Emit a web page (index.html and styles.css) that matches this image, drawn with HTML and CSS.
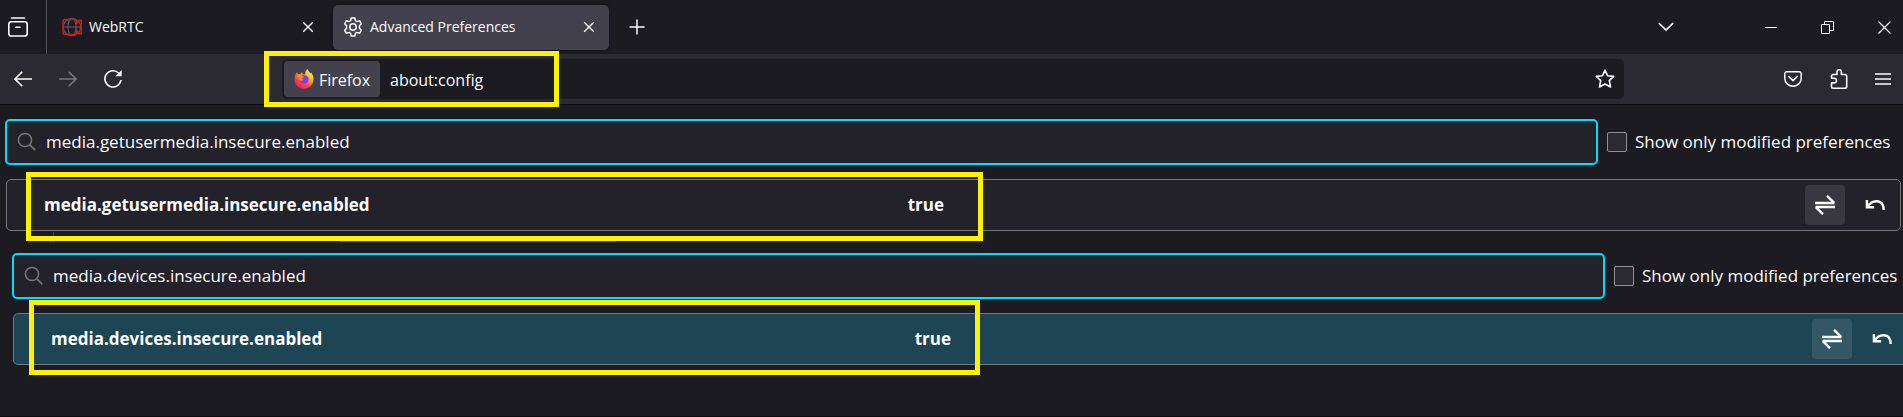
FILE: index.html
```html
<!DOCTYPE html>
<html lang="en">
<head>
<meta charset="utf-8">
<title>Advanced Preferences</title>
<link rel="stylesheet" href="styles.css">
</head>
<body>
<svg class="defs" width="0" height="0" aria-hidden="true">
  <symbol id="i-search" viewBox="0 0 20 20"><circle cx="8" cy="8" r="6.6" fill="none" stroke="currentColor" stroke-width="1.5"/><path d="M12.8 12.8l5.4 5.4" stroke="currentColor" stroke-width="1.7" fill="none"/></symbol>
  <symbol id="i-close" viewBox="0 0 12 12"><path d="M1.2 1.2l9.6 9.6M10.8 1.2l-9.6 9.6" stroke="currentColor" stroke-width="1.4" fill="none"/></symbol>
  <symbol id="i-toggle" viewBox="0 0 20 20"><path d="M0 8h19.4M12 .8L19.2 8M20 12H.6M8 19.2L.8 12" stroke="currentColor" stroke-width="2.4" fill="none"/></symbol>
  <symbol id="i-undo" viewBox="0 0 20 20"><path d="M1.9 5v7.300h7.300M2.300 11.900C5 7.800 8.600 6.100 12 6.300c4.200.3 6.600 3.800 6.700 8.700" stroke="currentColor" stroke-width="2.4" fill="none"/></symbol>
</svg>

<header class="browser">
  <div class="tabbar">
    <button class="view" aria-label="Firefox View">
      <svg width="20" height="20" viewBox="0 0 20 20" fill="none" stroke="currentColor" stroke-width="1.6" stroke-linecap="round"><path d="M3.500 1h13"/><rect x=".8" y="4.800" width="18.400" height="14.200" rx="2.600"/><path d="M8 10.300h4"/></svg>
    </button>
    <div class="tab">
      <svg width="20" height="20" viewBox="0 0 20 20" fill="none"><g stroke="#55535d" stroke-width="1.300"><circle cx="10" cy="10" r="8.700"/><ellipse cx="10" cy="10" rx="4" ry="8.700"/><path d="M1.500 10h17"/></g><path d="M3 2.500h9.500a2 2 0 012 2v2.300l2.800-3.500h1.900v13.400h-1.900l-2.800-3.500v2.300a2 2 0 01-2 2H3a2 2 0 01-2-2v-11a2 2 0 012-2z" stroke="#c4211f" stroke-width="1.500"/></svg>
      <span class="tab-label">WebRTC</span>
      <button class="tab-close" aria-label="Close WebRTC"><svg width="12" height="12"><use href="#i-close"/></svg></button>
    </div>
    <div class="tab tab-active">
      <svg width="20" height="20" viewBox="0 0 20 20" fill="none" stroke="currentColor" stroke-width="1.500" stroke-linejoin="round"><circle cx="10" cy="10" r="3.200"/><path d="M8.200 1h3.600l.6 2.700 1.600.9 2.600-.9 1.800 3.100-2 1.900v2.600l2 1.900-1.800 3.100-2.600-.9-1.600.9-.6 2.700H8.200l-.6-2.700-1.600-.9-2.600.9-1.800-3.100 2-1.900V8.700l-2-1.900 1.800-3.100 2.600.9 1.600-.9z"/></svg>
      <span class="tab-label">Advanced Preferences</span>
      <button class="tab-close" aria-label="Close Advanced Preferences"><svg width="12" height="12"><use href="#i-close"/></svg></button>
    </div>
    <button class="new-tab" aria-label="New tab"><svg width="16" height="16" viewBox="0 0 16 16"><path d="M8 .5v15M.5 8h15" stroke="currentColor" stroke-width="1.500"/></svg></button>
    <div class="window-controls">
      <button class="all-tabs" aria-label="List all tabs"><svg width="16" height="10" viewBox="0 0 16 10" fill="none"><path d="M.8 1L8 8l7.200-7" stroke="currentColor" stroke-width="1.700"/></svg></button>
      <button aria-label="Minimize"><svg width="12" height="13"><path d="M0 6.500h12" stroke="currentColor"/></svg></button>
      <button aria-label="Restore"><svg width="13" height="13" fill="none" stroke="currentColor"><path d="M.5 3.500h8v9h-8zM3.500 3.500v-3h9v9h-4"/></svg></button>
      <button aria-label="Close window"><svg width="13" height="13"><path d="M.5 .5l12 12M12.500 .5l-12 12" stroke="currentColor" stroke-width="1.100"/></svg></button>
    </div>
  </div>

  <nav class="navbar" aria-label="Navigation">
    <div class="history">
      <button aria-label="Back"><svg width="18" height="16" viewBox="0 0 18 16" fill="none"><path d="M8.300.8L1 8l7.300 7.200M1 8h17" stroke="currentColor" stroke-width="1.600"/></svg></button>
      <button aria-label="Forward" class="dim"><svg width="18" height="16" viewBox="0 0 18 16" fill="none"><path d="M9.700.8L17 8l-7.300 7.200M17 8H0" stroke="currentColor" stroke-width="1.600"/></svg></button>
      <button aria-label="Reload"><svg width="20" height="20" viewBox="0 0 20 20" fill="none"><path d="M15.800 4.200A8.100 8.100 0 1018 11" stroke="currentColor" stroke-width="1.600"/><path d="M18.700 1v6.300h-6.300z" fill="currentColor"/></svg></button>
    </div>
    <div class="urlbar">
      <button class="identity">
        <svg width="20" height="20" viewBox="0 0 20 20"><defs><linearGradient id="fx" x1=".85" y1=".1" x2=".2" y2=".95"><stop offset="0" stop-color="#fff04a"/><stop offset=".35" stop-color="#ffa329"/><stop offset=".65" stop-color="#ff4a3d"/><stop offset="1" stop-color="#e3157f"/></linearGradient></defs><path d="M3 3.200l1.300 2 2-.3L8.300 3l.3 2.200h2.800C10.800 3 12 1 13.700 0c.3 2 1.700 2.900 3 4.400l.3-1c2 2.200 2.800 4.800 2.500 7.400C19 16 15 19.800 10 19.800S.5 16 .4 10.600C.3 7.600 1.300 5 3 3.200z" fill="url(#fx)"/><path d="M7.500 6.500c2.200-1.300 5.600-.4 6.700 2.200 1.200 3-.9 6-4 6-2.300 0-4.200-1.500-4.300-3.500 1.200.7 2.800.4 3.900-.5-1.600-.2-2.400-.8-2.300-1.500l2.200-.7c0-.9-1-1.400-2.200-2z" fill="#7540df"/><path d="M3 7c1-1.300 2.700-1.700 4.200-1l2.500 2-2.200 1.200c-.1.800.7 1.300 2.300 1.500-1.100.9-2.700 1.200-3.900.5C4.200 10.700 3 9 3 7z" fill="#ff8a2a"/></svg>
        <span>Firefox</span>
      </button>
      <input class="address" type="text" aria-label="Address" value="about:config">
      <button class="star" aria-label="Bookmark this page"><svg width="20" height="20" viewBox="0 0 20 20" fill="none"><path d="M10 1.200l2.500 5.500 6.200.7-4.400 4.200 1.200 6.400L10 15l-5.500 3 1.200-6.400L1.300 7.400l6.200-.7z" stroke="currentColor" stroke-width="1.600" stroke-linejoin="round"/></svg></button>
    </div>
    <div class="tools">
      <button aria-label="Save to Pocket"><svg width="18" height="16" viewBox="0 0 18 16" fill="none" stroke="currentColor" stroke-width="1.500"><path d="M2.800.8h12.400a2 2 0 012 2v4.400c0 4.500-3.700 8-8.200 8s-8.200-3.500-8.200-8V2.800a2 2 0 012-2z"/><path d="M4.800 5.500L9 9.500l4.200-4" stroke-width="1.700" stroke-linecap="round"/></svg></button>
      <button aria-label="Extensions"><svg width="18" height="20" viewBox="0 0 18 20" fill="none" stroke="currentColor" stroke-width="1.600" stroke-linejoin="round"><path d="M7 5.500V3a2.200 2.200 0 014.400 0v2.500H15a1.700 1.700 0 011.700 1.700v10.300a1.700 1.700 0 01-1.700 1.700H3.200a1.700 1.700 0 01-1.700-1.700v-3.600h2.700a2.300 2.300 0 000-4.600H1.500V7.200a1.700 1.700 0 011.700-1.700z"/></svg></button>
      <button aria-label="Menu"><svg width="16" height="14" viewBox="0 0 16 14"><path d="M0 2h16M0 7h16M0 12h16" stroke="currentColor" stroke-width="1.500"/></svg></button>
    </div>
  </nav>
  <div class="mark mark-url"></div>
</header>

<main>
  <section class="config">
    <div class="search-line">
      <div class="search"><svg width="20" height="20"><use href="#i-search"/></svg><input type="text" aria-label="Search preference name" value="media.getusermedia.insecure.enabled"></div>
      <label class="modified"><input type="checkbox"><span>Show only modified preferences</span></label>
    </div>
    <table class="prefs">
      <tr>
        <th scope="row">media.getusermedia.insecure.enabled</th>
        <td class="value">true</td>
        <td class="edit"><button class="toggle" aria-label="Toggle"><svg width="20" height="20"><use href="#i-toggle"/></svg></button></td>
        <td class="reset"><button aria-label="Reset"><svg width="20" height="20"><use href="#i-undo"/></svg></button></td>
      </tr>
    </table>
    <div class="column-line"></div>
    <div class="mark mark-first"></div>
    <div class="row-line"></div>
  </section>
  <section class="config config-second">
    <div class="search-line">
      <div class="search"><svg width="20" height="20"><use href="#i-search"/></svg><input type="text" aria-label="Search preference name" value="media.devices.insecure.enabled"></div>
      <label class="modified"><input type="checkbox"><span>Show only modified preferences</span></label>
    </div>
    <table class="prefs prefs-selected">
      <tr>
        <th scope="row">media.devices.insecure.enabled</th>
        <td class="value">true</td>
        <td class="edit"><button class="toggle" aria-label="Toggle"><svg width="20" height="20"><use href="#i-toggle"/></svg></button></td>
        <td class="reset"><button aria-label="Reset"><svg width="20" height="20"><use href="#i-undo"/></svg></button></td>
      </tr>
    </table>
    <div class="mark mark-second"></div>
  </section>
</main>
</body>
</html>
```

FILE: styles.css
```css
* { box-sizing: border-box; }

body {
  margin: 0;
  min-height: 100vh;
  border-bottom: 1px solid #0c0c0d;
  background: #1c1b22;
  color: #fbfbfe;
  font-family: "Open Sans", "Noto Sans", sans-serif;
  font-size: 17px;
  line-height: 24px;
  overflow: hidden;
}

.defs { position: absolute; }

svg { display: block; flex: none; }

button {
  display: flex;
  align-items: center;
  justify-content: center;
  padding: 0;
  border: 0;
  background: none;
  color: inherit;
  font: inherit;
}

input {
  font: inherit;
  color: inherit;
  outline: 0;
}

.browser { position: relative; }

.tabbar {
  display: flex;
  align-items: center;
  height: 54px;
  font-size: 14px;
  line-height: 20px;
}

.view {
  width: 47px;
  height: 54px;
  padding-right: 10px;
  border-right: 1px solid #55545c;
}

.tab {
  display: flex;
  align-items: center;
  gap: 7px;
  width: 276px;
  height: 45px;
  margin-left: 5px;
  padding: 0 8px 0 10px;
  border-radius: 5px;
}

.tab-active {
  background: #42414d;
  box-shadow: 0 0 3px #0008;
}

.tab-label { flex: 1; }

.tab-close { width: 24px; height: 24px; }

.new-tab { width: 40px; height: 40px; margin-left: 8px; }

.window-controls {
  display: flex;
  margin-left: auto;
}

.window-controls button { width: 57px; height: 52px; }

.window-controls .all-tabs { width: 40px; margin-right: 56px; }

.window-controls button:last-child { width: 38px; margin-left: 9px; }

.navbar {
  display: flex;
  align-items: center;
  height: 51px;
  background: #2b2a33;
  border-bottom: 1px solid #0c0c0d;
}

.history {
  display: flex;
  width: 282px;
}

.history button { width: 45px; height: 40px; }

.dim { color: #77767e; }

.urlbar {
  display: flex;
  align-items: center;
  flex: 1;
  height: 40px;
  padding: 2px;
  border-radius: 5px;
  background: #1c1b22;
  font-size: 16px;
}

.identity {
  gap: 5px;
  width: 96px;
  height: 36px;
  border-radius: 4px;
  background: #42414d;
}

.identity span { padding-top: 2px; }

.address {
  flex: 1;
  min-width: 0;
  height: 36px;
  padding: 2px 10px 0;
  border: 0;
  background: none;
}

.star { width: 34px; height: 36px; }

.tools {
  display: flex;
  justify-content: flex-end;
  width: 279px;
}

.tools button { width: 46px; height: 40px; }

.tools button:last-child { width: 41px; }

.config {
  position: relative;
  padding: 14px 2px 0 5px;
}

.config-second {
  margin: 8px -7px 0 7px;
}

.search-line {
  display: flex;
  align-items: center;
  gap: 9px;
}

.search {
  display: flex;
  align-items: center;
  flex: 1;
  gap: 9px;
  height: 46px;
  padding: 0 10px;
  border: 2px solid #00ddff;
  border-radius: 5px;
  background: #23222b;
}

.search svg { color: #77767e; }

.search input {
  flex: 1;
  min-width: 0;
  padding: 0;
  border: 0;
  background: none;
}

.modified {
  display: flex;
  align-items: center;
  gap: 8px;
  width: 294px;
  white-space: nowrap;
}

.modified input {
  appearance: none;
  flex: none;
  width: 20px;
  height: 20px;
  margin: 0;
  border: 1px solid #8f8f9d;
  border-radius: 2px;
  background: #2b2a33;
}

.prefs {
  display: flex;
  margin: 14px 0 0 1px;
  border: 1px solid #77767a;
  border-radius: 5px;
  background: #23222b;
}

.prefs tbody { flex: 1; }

.prefs tr {
  display: flex;
  align-items: center;
  height: 50px;
}

.prefs th {
  width: 47%;
  padding: 0 37px;
  text-align: left;
}

.prefs td { padding: 0; }

.prefs .value {
  flex: 1;
  padding-left: 11px;
  font-weight: 700;
}

.prefs-selected { background: #1d4554; }

.prefs button {
  width: 40px;
  height: 40px;
  border-radius: 4px;
}

.prefs .toggle { background: #fbfbfe1a; }

.reset { margin: 0 5px 0 10px; }

/* Yellow callout frames drawn over the page */
.mark {
  position: absolute;
  border: 5px solid #fff200;
  pointer-events: none;
}

.mark-url { left: 264px; top: 51px; width: 295px; height: 56px; }

.mark-first { left: 26px; top: 67px; width: 957px; height: 69px; }

.mark-second { left: 22px; top: 61px; width: 951px; height: 75px; }

/* Faint rules showing from behind the first callout */
.column-line {
  position: absolute;
  left: 53px;
  top: 127px;
  height: 10px;
  border-left: 1px solid #42414d;
}

.row-line {
  position: absolute;
  left: 340px;
  top: 136px;
  width: 276px;
  border-top: 1px solid #42414d;
}
```
